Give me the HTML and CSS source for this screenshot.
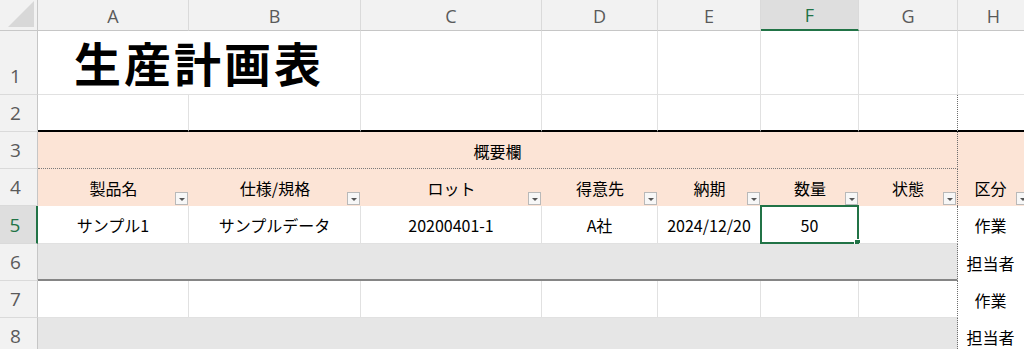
FILE: index.html
```html
<!DOCTYPE html>
<html lang="ja">
<head>
<meta charset="utf-8">
<title>生産計画表</title>
<link rel="stylesheet" href="styles.css">
</head>
<body>
<div class="sheet">
  <!-- column headers -->
  <div class="corner"><span class="tri"></span></div>
  <div class="ch">A</div>
  <div class="ch">B</div>
  <div class="ch">C</div>
  <div class="ch">D</div>
  <div class="ch">E</div>
  <div class="ch sel">F</div>
  <div class="ch">G</div>
  <div class="ch">H</div>

  <!-- row 1 -->
  <div class="rh">1</div>
  <div class="c title span2">生産計画表</div>
  <div class="c"></div>
  <div class="c"></div>
  <div class="c"></div>
  <div class="c"></div>
  <div class="c"></div>
  <div class="c"></div>

  <!-- row 2 -->
  <div class="rh">2</div>
  <div class="c thick"></div>
  <div class="c thick"></div>
  <div class="c thick"></div>
  <div class="c thick"></div>
  <div class="c thick"></div>
  <div class="c thick"></div>
  <div class="c thick pb"></div>
  <div class="c thick"></div>

  <!-- row 3 -->
  <div class="rh">3</div>
  <div class="c band pb">概要欄</div>
  <div class="c peach nb"></div>

  <!-- row 4 -->
  <div class="rh">4</div>
  <div class="c peach hd">製品名<span class="flt"></span></div>
  <div class="c peach hd">仕様/規格<span class="flt"></span></div>
  <div class="c peach hd">ロット<span class="flt"></span></div>
  <div class="c peach hd">得意先<span class="flt"></span></div>
  <div class="c peach hd">納期<span class="flt"></span></div>
  <div class="c peach hd">数量<span class="flt"></span></div>
  <div class="c peach hd pb">状態<span class="flt"></span></div>
  <div class="c peach hd colh">区分<span class="flt"></span></div>

  <!-- row 5 -->
  <div class="rh sel">5</div>
  <div class="c">サンプル1</div>
  <div class="c">サンプルデータ</div>
  <div class="c">20200401-1</div>
  <div class="c">A社</div>
  <div class="c">2024/12/20</div>
  <div class="c active">50<span class="selbox"><span class="handle"></span></span></div>
  <div class="c pb"></div>
  <div class="c nb colh">作業</div>

  <!-- row 6 -->
  <div class="rh">6</div>
  <div class="c gray sep pb"></div>
  <div class="c nb colh">担当者</div>

  <!-- row 7 -->
  <div class="rh">7</div>
  <div class="c"></div>
  <div class="c"></div>
  <div class="c"></div>
  <div class="c"></div>
  <div class="c"></div>
  <div class="c"></div>
  <div class="c pb"></div>
  <div class="c nb colh">作業</div>

  <!-- row 8 -->
  <div class="rh">8</div>
  <div class="c gray pb"></div>
  <div class="c nb colh">担当者</div>
</div>
</body>
</html>
```

FILE: styles.css
```css
html, body {
  margin: 0;
  padding: 0;
  background: #ffffff;
}

body {
  width: 1024px;
  height: 349px;
  overflow: hidden;
}

.sheet {
  display: grid;
  grid-template-columns: 38px 151px 172px 181px 116px 103px 98px 99px 72px;
  grid-template-rows: 31px 64px 37px 37px 37px 38px 37px 37px 37px;
  width: 1030px;
}

.corner {
  background: #f2f2f2;
  border-right: 1px solid #c8c8c8;
  border-bottom: 1px solid #c8c8c8;
  position: relative;
}

.tri {
  position: absolute;
  right: 3px;
  bottom: 3px;
  width: 0;
  height: 0;
  border-left: 26px solid transparent;
  border-bottom: 26px solid #d8d8d8;
}

.ch {
  background: #f2f2f2;
  border-right: 1px solid #dadada;
  border-bottom: 1px solid #c6c6c6;
  color: #5a5a5a;
  font-family: "Open Sans", "Noto Sans", sans-serif;
  font-size: 18px;
  display: flex;
  align-items: center;
  justify-content: center;
  padding-top: 1px;
}

.ch.sel {
  background: #dedede;
  color: #217346;
  border-bottom: 2px solid #217346;
}

.rh {
  background: #f2f2f2;
  border-right: 1px solid #c6c6c6;
  border-bottom: 1px solid #dadada;
  color: #5a5a5a;
  font-family: "Open Sans", "Noto Sans", sans-serif;
  font-size: 19px;
  display: flex;
  align-items: flex-end;
  justify-content: center;
  padding-bottom: 7px;
  padding-right: 6px;
  box-sizing: border-box;
  line-height: 22px;
}

.rh.sel {
  background: #dedede;
  color: #217346;
  border-right: 2px solid #217346;
}

.c {
  border-right: 1px solid #e1e1e1;
  border-bottom: 1px solid #e1e1e1;
  display: flex;
  align-items: center;
  justify-content: center;
  font-family: "Noto Sans CJK JP", "Noto Sans", sans-serif;
  font-size: 16px;
  font-weight: 400;
  color: #000;
  position: relative;
  min-width: 0;
}

.span2 {
  grid-column: span 2;
}

.title {
  justify-content: flex-start;
  align-items: flex-end;
  padding-left: 36px;
  padding-bottom: 8px;
  font-size: 47px;
  font-weight: 700;
  letter-spacing: 3px;
  line-height: 48px;
}

.thick {
  border-bottom: 2px solid #000;
}

.band {
  grid-column: span 7;
  background: #fce4d6;
  border-bottom: 1px dotted #7a7a7a;
  padding-top: 2px;
}

.peach {
  background: #fce4d6;
  border-right: none;
  border-bottom: none;
}

.pb {
  border-right: 1px dotted #6e6e6e;
}

.nb {
  border-bottom: none;
  border-right: none;
}

.colh {
  padding-right: 7px;
}

.flt {
  position: absolute;
  right: 1px;
  bottom: 1px;
  width: 11px;
  height: 11px;
  border: 1px solid #b9b9b9;
  background: #f7f7f7;
}

.flt::after {
  content: "";
  position: absolute;
  left: 3px;
  top: 5px;
  width: 0;
  height: 0;
  border-left: 3px solid transparent;
  border-right: 3px solid transparent;
  border-top: 3px solid #555;
}

.active {
  padding-top: 1px;
}

.selbox {
  position: absolute;
  left: -1px;
  top: -1px;
  right: -1px;
  bottom: -1px;
  border: 2px solid #217346;
}

.handle {
  position: absolute;
  right: -4px;
  bottom: -4px;
  width: 5px;
  height: 5px;
  background: #217346;
  border: 1px solid #fff;
}

.gray {
  grid-column: span 7;
  background: #e6e6e6;
  border-bottom: none;
}

.gray.sep {
  border-bottom: 2px solid #858585;
}
```
